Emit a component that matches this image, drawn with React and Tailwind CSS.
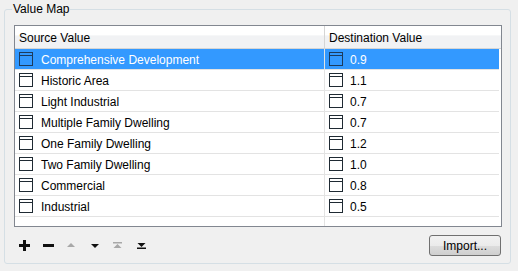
const ROWS = [
  { src: 'Comprehensive Development', dst: '0.9' },
  { src: 'Historic Area', dst: '1.1' },
  { src: 'Light Industrial', dst: '0.7' },
  { src: 'Multiple Family Dwelling', dst: '0.7' },
  { src: 'One Family Dwelling', dst: '1.2' },
  { src: 'Two Family Dwelling', dst: '1.0' },
  { src: 'Commercial', dst: '0.8' },
  { src: 'Industrial', dst: '0.5' },
];

// little "window" glyph shown in front of each cell value
function CellIcon({ selected }) {
  const c = selected ? '#1d3b5c' : '#1f2a33';
  return (
    <svg width="14" height="14" viewBox="0 0 14 14" className="shrink-0">
      <rect x="0.5" y="0.5" width="13" height="13" fill="none" stroke={c} strokeWidth="1" />
      <line x1="1" y1="3.5" x2="13" y2="3.5" stroke={c} strokeWidth="1" />
    </svg>
  );
}

function ToolIcon({ kind, disabled }) {
  const fill = disabled ? '#a8a8a8' : '#111';
  if (kind === 'plus')
    return (
      <svg width="11" height="11" viewBox="0 0 11 11">
        <rect x="0" y="4" width="11" height="3" fill={fill} />
        <rect x="4" y="0" width="3" height="11" fill={fill} />
      </svg>
    );
  if (kind === 'minus')
    return (
      <svg width="11" height="11" viewBox="0 0 11 11">
        <rect x="0" y="4" width="11" height="3" fill={fill} />
      </svg>
    );
  if (kind === 'up')
    return (
      <svg width="8" height="11" viewBox="0 0 8 11">
        <path d="M4 3 L8 7 L0 7 Z" fill={fill} />
      </svg>
    );
  if (kind === 'down')
    return (
      <svg width="8" height="11" viewBox="0 0 8 11">
        <path d="M0 4 L8 4 L4 8 Z" fill={fill} />
      </svg>
    );
  if (kind === 'top')
    return (
      <svg width="9" height="11" viewBox="0 0 9 11">
        <rect x="0" y="2" width="9" height="1.5" fill={fill} />
        <path d="M4.5 4 L8.5 8 L0.5 8 Z" fill={fill} />
      </svg>
    );
  return (
    <svg width="9" height="11" viewBox="0 0 9 11">
      <path d="M0.5 3 L8.5 3 L4.5 7 Z" fill={fill} />
      <rect x="0" y="7.5" width="9" height="1.5" fill={fill} />
    </svg>
  );
}

export default function App() {
  return (
    <div
      className="w-[518px] h-[271px] bg-[#f0f0f0] pt-[9px] pl-[4px] pr-[7px] text-[12px] text-black"
      style={{ fontFamily: '"Liberation Sans", Arial, sans-serif' }}
    >
      <div className="relative h-[255px] border border-[#d5dfe5] rounded-[3px] pt-[15px] pl-[9px] pr-[8px]">
        <div className="absolute left-[7px] -top-[8px] px-[1px] bg-[#f0f0f0] leading-[14px]">Value Map</div>

        {/* table */}
        <div className="w-[488px] h-[202px] border border-[#828790] bg-white flex flex-col">
          <div className="flex h-[23px] border-b border-[#d5d5d5] bg-[linear-gradient(#ffffff_0%,#ffffff_40%,#f1f2f4_45%,#f1f2f4_100%)] pr-[2px]">
            <div className="w-[310px] border-r border-[#d5d5d5] pl-[4px] pt-[1px] flex items-center">Source Value</div>
            <div className="flex-1 pl-[4px] pt-[1px] flex items-center">Destination Value</div>
          </div>
          {ROWS.map((r, i) => {
            const sel = i === 0;
            return (
              <div
                key={r.src}
                className={`flex h-[21px] border-b border-[#e3e3e3] mr-[2px] ${sel ? 'bg-[#3399ff] text-white' : ''}`}
              >
                <div className="w-[310px] border-r border-[#e3e3e3] pl-[4px] flex items-center gap-[8px]">
                  <CellIcon selected={sel} />
                  <span className="pt-[1px]">{r.src}</span>
                </div>
                <div className="flex-1 pl-[4px] flex items-center gap-[7px]">
                  <CellIcon selected={sel} />
                  <span className="pt-[1px]">{r.dst}</span>
                </div>
              </div>
            );
          })}
          <div className="flex flex-1 mr-[2px]">
            <div className="w-[310px] border-r border-[#e3e3e3]" />
          </div>
        </div>

        {/* toolbar */}
        <div className="flex items-center justify-between mt-[8px] pr-[1px]">
          <div className="flex items-center pl-[5px]">
            <div className="w-[24px]"><ToolIcon kind="plus" /></div>
            <div className="w-[24px]"><ToolIcon kind="minus" /></div>
            <div className="w-[24px]"><ToolIcon kind="up" disabled /></div>
            <div className="w-[22px]"><ToolIcon kind="down" /></div>
            <div className="w-[24px]"><ToolIcon kind="top" disabled /></div>
            <div className="w-[24px]"><ToolIcon kind="bottom" /></div>
          </div>
          <button className="w-[72px] h-[21px] rounded-[3px] border border-[#707070] bg-[linear-gradient(#f2f2f2_0%,#ebebeb_50%,#dddddd_51%,#cfcfcf_100%)] text-[12px] leading-none">
            Import...
          </button>
        </div>
      </div>
    </div>
  );
}
